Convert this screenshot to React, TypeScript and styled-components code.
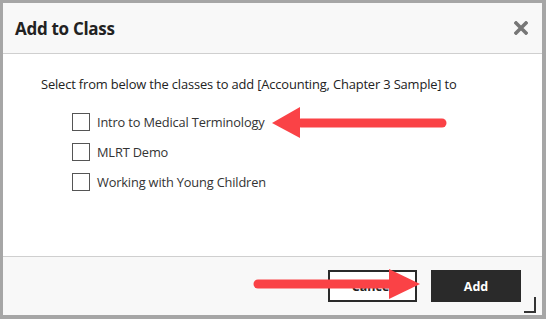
import styled, { createGlobalStyle } from 'styled-components';

const GlobalStyle = createGlobalStyle`
    html, body {
        margin: 0;
        padding: 0;
        background: #a6a6a6;
    }
    body {
        font-family: 'Open Sans', 'Liberation Sans', sans-serif;
        color: #222222;
    }
`;

const Dialog = styled.div`
    position: relative;
    margin: 3px 4px 4px 3px;
    height: 312px;
    background: #ffffff;
    display: flex;
    flex-direction: column;
`;

const Header = styled.div`
    height: 50px;
    background: #f8f8f8;
    border-bottom: 1px solid #cfcfcf;
    display: flex;
    align-items: center;
    justify-content: space-between;
    padding: 0 14px 0 12px;
    box-sizing: content-box;
`;

const Title = styled.h1`
    margin: 0;
    font-size: 17px;
    font-weight: 700;
    color: #222222;
    letter-spacing: -0.3px;
`;

const Close = styled.button`
    border: 0;
    background: none;
    padding: 0;
    width: 14px;
    height: 14px;
    cursor: pointer;
    display: flex;
`;

const Body = styled.div`
    flex: 1;
    padding: 21px 0 0 38px;
`;

const Lead = styled.p`
    margin: 0 0 20px;
    font-size: 12.9px;
    line-height: 18px;
    letter-spacing: -0.15px;
`;

const List = styled.div`
    display: flex;
    flex-direction: column;
    gap: 12px;
    padding-left: 31px;
`;

const Option = styled.label`
    display: flex;
    align-items: center;
    gap: 7px;
    font-size: 12.8px;
    letter-spacing: -0.15px;
    color: #333333;
`;

const Box = styled.span`
    width: 16px;
    height: 16px;
    border: 1px solid #555555;
    background: #ffffff;
    display: inline-block;
`;

const Footer = styled.div`
    height: 58px;
    background: #f8f8f8;
    border-top: 1px solid #cfcfcf;
    display: flex;
    align-items: center;
    justify-content: flex-end;
    gap: 14px;
    padding-right: 21px;
`;

const Button = styled.button<{ primary?: boolean }>`
    height: 32px;
    width: ${(p) => (p.primary ? '90px' : '89px')};
    font-family: 'Open Sans', 'Liberation Sans', sans-serif;
    font-size: 12.5px;
    font-weight: 700;
    color: ${(p) => (p.primary ? '#ffffff' : '#222222')};
    background: ${(p) => (p.primary ? '#2a2a2a' : '#ffffff')};
    border: 2px solid #2a2a2a;
    padding: 0;
`;

const Grip = styled.span`
    position: absolute;
    right: 6px;
    bottom: 2px;
    width: 10px;
    height: 14px;
    border-right: 2px solid #333333;
    border-bottom: 2px solid #333333;
`;

const Arrow = styled.svg`
    position: absolute;
    overflow: visible;
`;

const classes = ['Intro to Medical Terminology', 'MLRT Demo', 'Working with Young Children'];

export default function App() {
    return (
        <>
            <GlobalStyle />
            <Dialog>
                <Header>
                    <Title>Add to Class</Title>
                    <Close aria-label="Close">
                        <svg width="14" height="14" viewBox="0 0 14 14">
                            <path d="M2 2 L12 12 M12 2 L2 12" stroke="#777777" strokeWidth="3.6" strokeLinecap="square" />
                        </svg>
                    </Close>
                </Header>
                <Body>
                    <Lead>Select from below the classes to add [Accounting, Chapter 3 Sample] to</Lead>
                    <List>
                        {classes.map((name) => (
                            <Option key={name}>
                                <Box />
                                {name}
                            </Option>
                        ))}
                    </List>
                </Body>
                <Footer>
                    <Button>Cancel</Button>
                    <Button primary>Add</Button>
                </Footer>
                <Grip />
                <Arrow style={{ left: 268, top: 104 }} width="180" height="34" viewBox="0 0 180 34">
                    <line x1="30" y1="16" x2="171" y2="16" stroke="#fa4246" strokeWidth="9" strokeLinecap="round" />
                    <polygon points="1,16 29,0 29,31" fill="#fa4246" />
                </Arrow>
                <Arrow style={{ left: 245, top: 263 }} width="180" height="32" viewBox="0 0 180 32">
                    <line x1="10" y1="18" x2="144" y2="18" stroke="#fa4246" strokeWidth="9" strokeLinecap="round" />
                    <polygon points="141,3 172,18 141,33" fill="#fa4246" />
                </Arrow>
            </Dialog>
        </>
    );
}
